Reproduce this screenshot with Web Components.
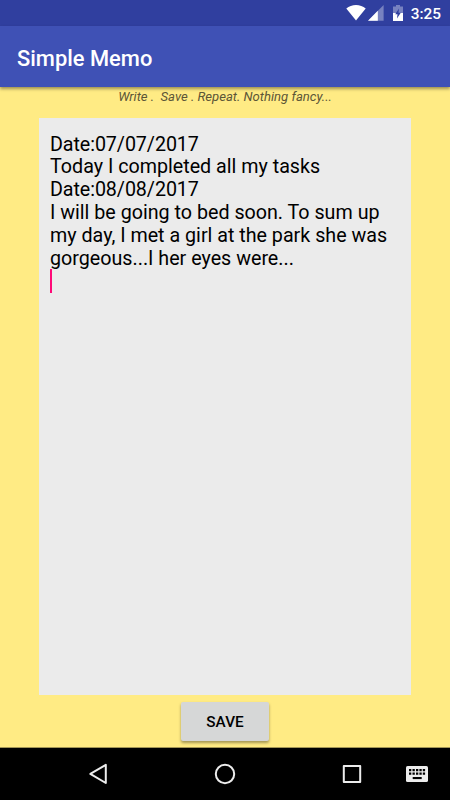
<!DOCTYPE html>
<html lang="en">
<head>
<meta charset="utf-8">
<title>Simple Memo</title>
<style>
  html, body { margin: 0; height: 100%; }
  body { font-family: Roboto, "Noto Sans", sans-serif; background: #ffeb84; overflow: hidden; }
  .date { letter-spacing: -.08px; }
</style>
</head>
<body>
<memo-app>
  <status-bar slot="status" time="3:25"></status-bar>
  <app-bar slot="bar">Simple Memo</app-bar>
  <tag-line>Write .&nbsp; Save . Repeat. Nothing fancy...</tag-line>
  <memo-pad><span class="date">Date:07/07/2017</span>
Today I completed all my tasks
<span class="date">Date:08/08/2017</span>
I will be going to bed soon. To sum up
my day, I met a girl at the park she was
gorgeous...I her eyes were...
</memo-pad>
  <raised-button>SAVE</raised-button>
  <nav-bar slot="nav"></nav-bar>
</memo-app>

<script>
class BaseElement extends HTMLElement {
  constructor() {
    super();
    this.attachShadow({ mode: 'open' });
  }
  connectedCallback() {
    this.shadowRoot.innerHTML = this.render();
  }
}

class MemoApp extends BaseElement {
  render() {
    return `
      <style>
        :host { display: flex; flex-direction: column; width: 450px; height: 800px; background: #ffeb84; }
        main  { flex: 1; min-height: 0; display: flex; flex-direction: column; align-items: center; }
      </style>
      <slot name="status"></slot>
      <slot name="bar"></slot>
      <main><slot></slot></main>
      <slot name="nav"></slot>
    `;
  }
}
customElements.define('memo-app', MemoApp);

class StatusBar extends BaseElement {
  render() {
    return `
      <style>
        :host {
          display: flex; justify-content: flex-end; align-items: center;
          box-sizing: border-box; height: 26px; padding-right: 9px;
          background: #303f9f; color: #fff;
        }
        svg   { display: block; }
        .sig  { margin: 0 9px 0 1.5px; }
        .time { margin-left: 8px; padding-top: 2px; font-size: 15.4px; line-height: 24px; font-weight: 500; }
      </style>
      <svg width="20" height="16" viewBox="0 0 20 16">
        <path fill="#fff" d="M10 15.6 L0.3 3.5 C3 1.3 6.3 0.1 10 0.1 S17 1.3 19.7 3.5 Z"/>
      </svg>
      <svg class="sig" width="16" height="16" viewBox="0 0 16 16">
        <path fill="#fff" fill-opacity=".35" d="M0 15.7 L15.6 0 V15.7 Z"/>
        <path fill="#fff" d="M0 15.7 L9.8 5.8 V15.7 Z"/>
      </svg>
      <svg width="10" height="16" viewBox="0 0 10 16">
        <path fill="#fff" fill-opacity=".35" d="M3 0 H7 V1.6 H10 V8 H0 V1.6 H3 Z"/>
        <path fill="#fff" d="M0 8 H10 V16 H0 Z"/>
        <path fill="#303f9f" d="M6 3.6 L2.2 9.2 H4.5 L4 13.6 L7.8 7.8 H5.5 Z"/>
      </svg>
      <span class="time">${this.getAttribute('time')}</span>
    `;
  }
}
customElements.define('status-bar', StatusBar);

class AppBar extends BaseElement {
  render() {
    return `
      <style>
        :host {
          display: flex; align-items: center; position: relative;
          box-sizing: border-box; height: 61px; padding: 3px 17px 0;
          background: #3f51b5; color: #fff;
          font-size: 21.9px; font-weight: 500;
          box-shadow: 0 2px 3px rgba(0, 0, 0, .38);
        }
      </style>
      <slot></slot>
    `;
  }
}
customElements.define('app-bar', AppBar);

class TagLine extends BaseElement {
  render() {
    return `
      <style>
        :host {
          display: block; height: 31px; line-height: 20px;
          font-size: 13.1px; font-style: italic;
          color: #5c5637;
        }
      </style>
      <slot></slot>
    `;
  }
}
customElements.define('tag-line', TagLine);

class MemoPad extends BaseElement {
  render() {
    return `
      <style>
        :host {
          display: block; box-sizing: border-box;
          width: 372px; height: 577px; padding: 15.6px 11px;
          background: #ebebeb; color: #000;
          font-size: 19.7px; line-height: 22.85px;
        }
        slot { white-space: pre; }
        i { display: inline-block; width: 2px; height: 24px; margin-top: -2px; background: #ff0a78; vertical-align: top; }
      </style>
      <slot></slot><i></i>
    `;
  }
}
customElements.define('memo-pad', MemoPad);

class RaisedButton extends BaseElement {
  render() {
    return `
      <style>
        :host { display: block; margin-top: 7px; }
        button {
          display: block; width: 88px; height: 39px; padding: 1px 0 0;
          border: 0; border-radius: 2px; background: #d6d7d7; color: #000;
          font: 500 15.3px Roboto, sans-serif;
          box-shadow: 0 2px 3px rgba(0, 0, 0, .36);
        }
      </style>
      <button><slot></slot></button>
    `;
  }
}
customElements.define('raised-button', RaisedButton);

class NavBar extends BaseElement {
  render() {
    return `
      <style>
        :host {
          display: grid; grid-template-columns: 35.5px 126.5px 126.5px 126.5px 35px;
          align-items: center; box-sizing: border-box; height: 53px;
          background: #000; border-top: 1px solid #a39655;
        }
        svg { display: block; justify-self: center; }
        .keys { justify-self: start; margin-left: -9px; }
      </style>
      <span></span>
      <svg width="22" height="22" viewBox="0 0 22 22" fill="none" stroke="#ececec" stroke-width="2" stroke-linejoin="round">
        <path d="M17.8 1.8 V20 L2.3 10.9 Z"/>
      </svg>
      <svg width="22" height="22" viewBox="0 0 22 22" fill="none" stroke="#ececec" stroke-width="2">
        <circle cx="11" cy="11" r="9.2"/>
      </svg>
      <svg width="20" height="20" viewBox="0 0 20 20" fill="none" stroke="#ececec" stroke-width="2" stroke-linejoin="round">
        <rect x="1.8" y="2" width="16.4" height="16"/>
      </svg>
      <svg class="keys" width="22" height="16" viewBox="0 0 22 16">
        <rect width="22" height="16" rx="1.6" fill="#ececec"/>
        <g fill="#000">
          <path d="M3 3h2.3v2.2H3z M6.5 3h2.3v2.2H6.5z M10 3h2.3v2.2H10z M13.4 3h2.3v2.2h-2.3z M16.8 3h2.3v2.2h-2.3z"/>
          <path d="M3 6.6h2.3v2.2H3z M6.5 6.6h2.3v2.2H6.5z M10 6.6h2.3v2.2H10z M13.4 6.6h2.3v2.2h-2.3z M16.8 6.6h2.3v2.2h-2.3z"/>
          <path d="M6.7 11h9v2.1h-9z"/>
        </g>
      </svg>
    `;
  }
}
customElements.define('nav-bar', NavBar);
</script>
</body>
</html>
